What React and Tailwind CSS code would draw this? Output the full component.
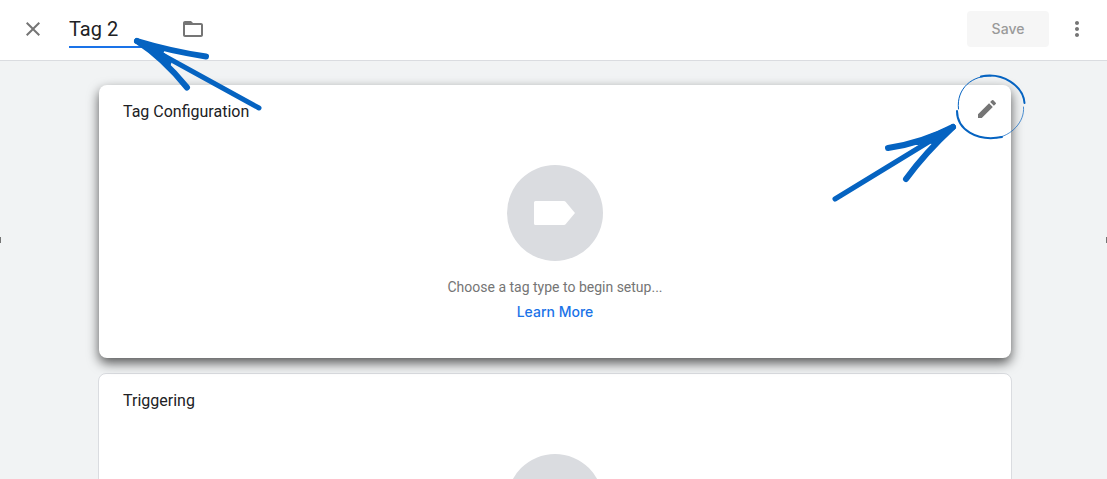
import React, { useState } from 'react';
import { MdClose, MdEdit, MdFolderOpen, MdMoreVert } from 'react-icons/md';

function EmptyIcon() {
  return (
    <div className="flex size-24 items-center justify-center rounded-full bg-[#dadce0]">
      <svg width="42" height="26" viewBox="0 0 42 26" fill="#fff" aria-hidden="true">
        <path d="M1.500 1H30a2 2 0 0 1 1.600.8L41 13l-9.400 11.200a2 2 0 0 1-1.600.8H1.500A1.500 1.500 0 0 1 0 23.500V2.500A1.500 1.500 0 0 1 1.500 1z" />
      </svg>
    </div>
  );
}

function NameArrow() {
  return (
    <svg
      className="pointer-events-none absolute top-[34px] left-[130px] z-20"
      width="136"
      height="80"
      viewBox="130 34 136 80"
      fill="none"
      stroke="#0563c1"
      strokeLinecap="round"
      strokeLinejoin="round"
      aria-hidden="true"
    >
      <path d="M137 41L259 108" strokeWidth="5" />
      <path d="M137 41Q170 51 206 56.500" strokeWidth="6" />
      <path d="M137 41Q163 58 187 87.500" strokeWidth="6" />
      <path d="M137 41L163 49L161 53L170 60L169 64L158 57Z" fill="#0563c1" strokeWidth="4" />
    </svg>
  );
}

function EditArrow() {
  return (
    <svg
      className="pointer-events-none absolute -top-3 -right-[17px]"
      width="200"
      height="136"
      viewBox="828 73 200 136"
      fill="none"
      stroke="#0563c1"
      strokeLinecap="round"
      strokeLinejoin="round"
      aria-hidden="true"
    >
      <path d="M835 199L953 127" strokeWidth="5" />
      <path d="M888 148Q922 143 953 127" strokeWidth="6" />
      <path d="M906 179Q925 153 953 127" strokeWidth="6" />
      <path d="M953 127L914 143L918 143L930 141L934 143Z" fill="#0563c1" strokeWidth="4" />
      <path d="M958.500 109C956 88 973 75 991 76" strokeWidth="1" />
      <path d="M981 76.500C1003 72 1023 86 1024.500 103" strokeWidth="2" />
      <path d="M1023.500 107C1025 122 1011 136 996 138" strokeWidth="1" strokeOpacity="0.7" />
      <path d="M957 111C957 129 976 142 1002 137" strokeWidth="2" />
    </svg>
  );
}

export default function App() {
  const [name, setName] = useState('Tag 2');

  return (
    <div className="relative flex h-screen flex-col overflow-hidden bg-[#f1f3f4] font-['Inter',sans-serif] text-[#202124]">
      <header className="flex h-[61px] shrink-0 items-center border-b border-[#dadce0] bg-white pr-[18px] pb-[3px] pl-[21px] text-[#757575]">
        <button type="button" aria-label="Close">
          <MdClose size={24} />
        </button>
        <input
          aria-label="Tag name"
          className="mt-[3px] ml-6 h-9 w-[76px] border-b-2 border-[#1a73e8] font-['Roboto',sans-serif] text-xl text-[#202124] outline-none"
          value={name}
          onChange={(e) => setName(e.target.value)}
        />
        <button type="button" aria-label="Choose folder" className="ml-9">
          <MdFolderOpen size={24} />
        </button>
        <button
          type="button"
          disabled
          className="ml-auto h-9 w-[82px] rounded bg-[#f6f6f6] text-sm font-medium text-[#9a9a9a]"
        >
          Save
        </button>
        <button type="button" aria-label="More actions" className="ml-4">
          <MdMoreVert size={24} />
        </button>
      </header>

      <main className="flex flex-1 flex-col gap-[15px] pt-6 pr-[95px] pl-[98px]">
        <section className="relative z-10 mx-px flex shrink-0 flex-col rounded-lg bg-white px-6 pt-[15px] pb-[34px] shadow-[0_5px_12px_rgba(0,0,0,0.65)]">
          <h2 className="font-['Roboto',sans-serif] leading-6">Tag Configuration</h2>
          <button type="button" aria-label="Edit tag configuration" className="absolute top-3 right-3 text-[#757575]">
            <MdEdit size={24} />
          </button>
          <div className="mt-[41px] flex flex-col items-center">
            <EmptyIcon />
            <p className="mt-4 font-['Roboto',sans-serif] text-sm leading-5 text-[#757575]">
              Choose a tag type to begin setup...
            </p>
            <a href="#" className="mt-[3px] text-sm leading-6 font-medium text-[#1a73e8]">
              Learn More
            </a>
          </div>
          <EditArrow />
        </section>

        <section className="flex shrink-0 flex-col rounded-lg border border-[#dadce0] bg-white px-6 pt-[15px] pb-[34px]">
          <h2 className="font-['Roboto',sans-serif] leading-6">Triggering</h2>
          <div className="mt-[41px] flex flex-col items-center">
            <EmptyIcon />
          </div>
        </section>
      </main>

      <NameArrow />
      {/* side resize handles */}
      <span className="absolute top-[237px] left-0 h-1.5 w-px bg-[#757575]" />
      <span className="absolute top-[237px] right-0 h-1.5 w-px bg-[#757575]" />
    </div>
  );
}
